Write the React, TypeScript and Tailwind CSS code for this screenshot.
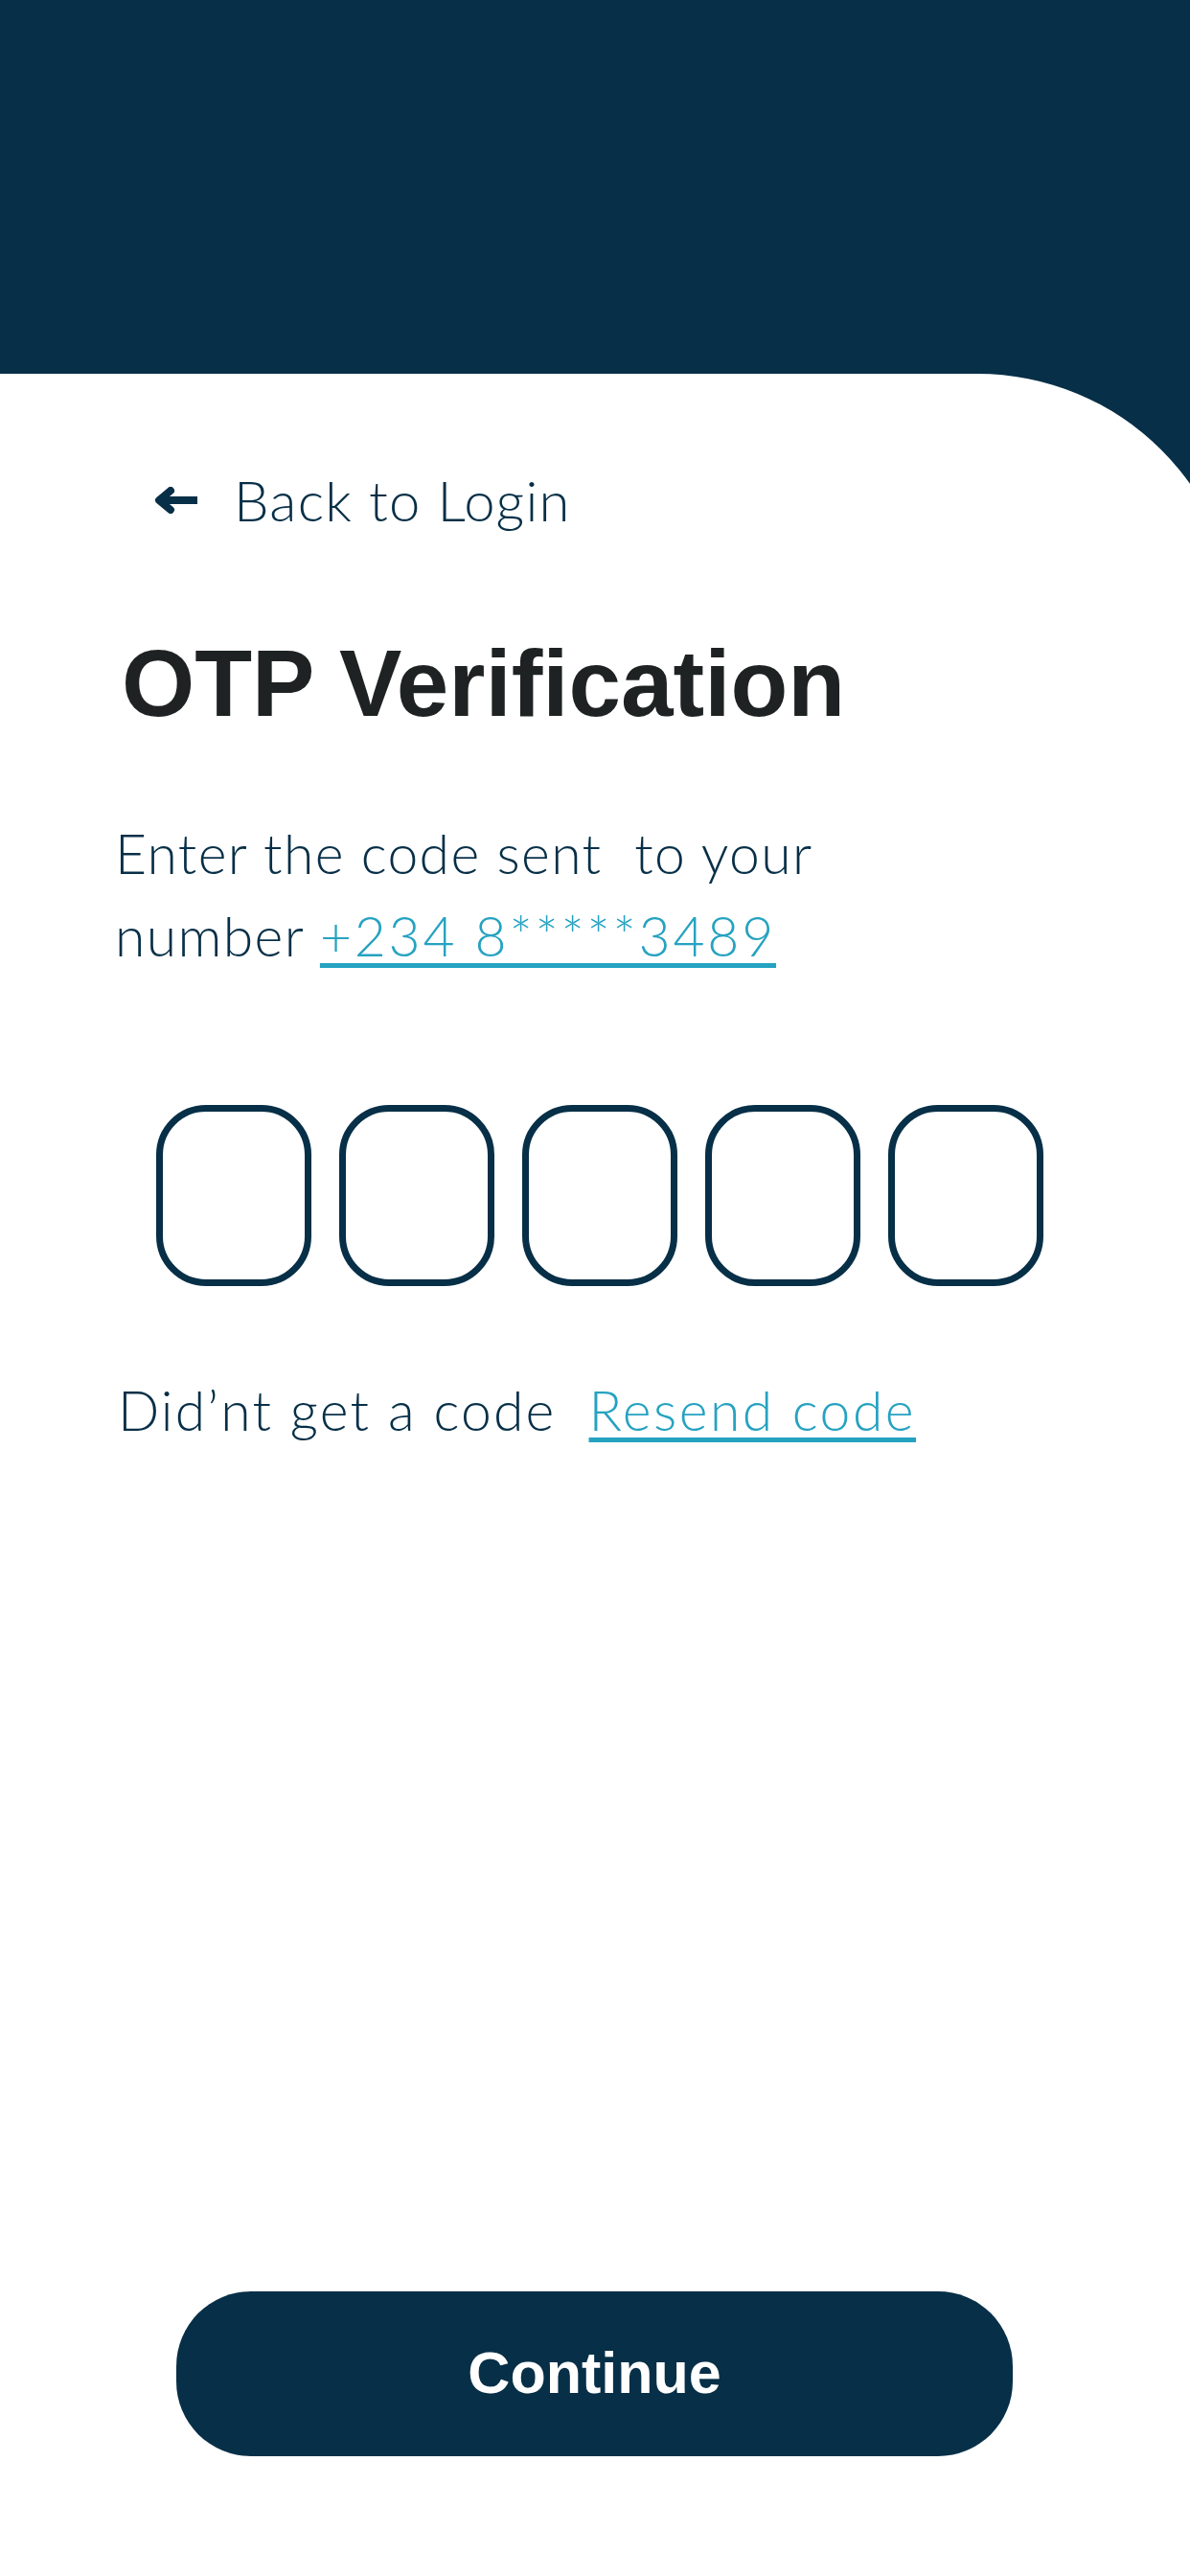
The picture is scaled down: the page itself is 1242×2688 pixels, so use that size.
const body = { fontFamily: "Lato, 'Noto Sans', sans-serif" }
const bold = { fontFamily: "'Liberation Sans', Arial, sans-serif" }

function BackArrow() {
  return (
    <svg width="48" height="28" viewBox="0 0 48 28" fill="none">
      <path d="M46 14H7" stroke="#072f47" strokeWidth="8" />
      <path d="M18 4L6 14L18 24" stroke="#072f47" strokeWidth="8" strokeLinecap="round" strokeLinejoin="round" />
    </svg>
  )
}

export default function App() {
  const boxes = [0, 1, 2, 3, 4]

  return (
    <div className="w-[1242px] h-[2688px] bg-[#072f47] overflow-hidden flex flex-col">
      <div className="h-[390px] shrink-0" />
      <div className="flex-1 w-[1292px] bg-white rounded-tr-[272px] flex flex-col text-[#072f47]" style={body}>
        <div className="mt-[97px] ml-[160px] flex items-center h-[70px]">
          <BackArrow />
          <span className="ml-[36px] text-[58px] leading-[70px] font-light tracking-[1.2px]">Back to Login</span>
        </div>

        <h1 className="mt-[107px] ml-[127px] text-[98px] leading-[98px] font-bold text-[#1e2222]" style={bold}>
          OTP Verification
        </h1>

        <p className="mt-[85px] ml-[120px] text-[57px] leading-[86px] font-light whitespace-pre-wrap tracking-[1.4px]">
          {"Enter the code sent  to your"}
          <br />
          {"number "}
          <span className="text-[#26a2c1] underline decoration-[5px] underline-offset-[7px] tracking-[2.8px]">
            +234 8*****3489
          </span>
        </p>

        <div className="mt-[134px] ml-[163px] flex gap-[29px]">
          {boxes.map((b) => (
            <div key={b} className="w-[162px] h-[189px] rounded-[52px] border-[7px] border-[#072f47]" />
          ))}
        </div>

        <div className="mt-[94px] ml-[123px] flex gap-[34px] text-[57px] leading-[70px] font-light">
          <span className="tracking-[2.2px]">Did’nt get a code</span>
          <span className="text-[#26a2c1] underline decoration-[5px] underline-offset-[7px] tracking-[2.5px]">
            Resend code
          </span>
        </div>

        <button
          className="mt-auto mb-[125px] ml-[184px] w-[873px] h-[172px] rounded-[78px] bg-[#072f47] text-white text-[61px] font-bold"
          style={bold}
        >
          Continue
        </button>
      </div>
    </div>
  )
}
